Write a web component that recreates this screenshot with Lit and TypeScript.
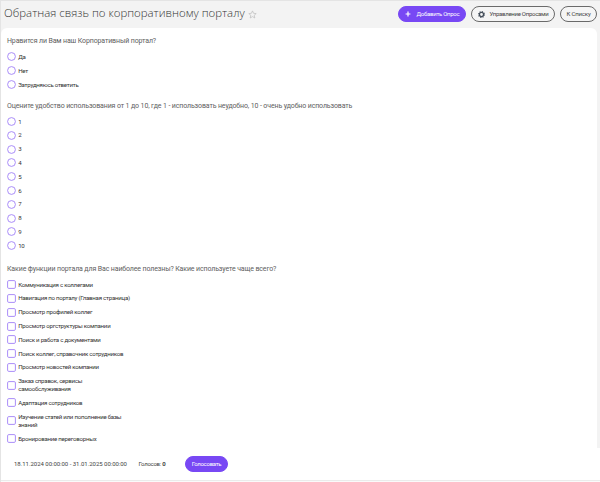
import { LitElement, html, css, svg } from "lit";
import { customElement, property } from "lit/decorators.js";

interface Question {
  title: string;
  kind: "radio" | "checkbox";
  options: string[];
}

const questions: Question[] = [
  {
    title: "Нравится ли Вам наш Корпоративный портал?",
    kind: "radio",
    options: ["Да", "Нет", "Затрудняюсь ответить"],
  },
  {
    title: "Оцените удобство использования от 1 до 10, где 1 - использовать неудобно, 10 - очень удобно использовать",
    kind: "radio",
    options: ["1", "2", "3", "4", "5", "6", "7", "8", "9", "10"],
  },
  {
    title: "Какие функции портала для Вас наиболее полезны? Какие используете чаще всего?",
    kind: "checkbox",
    options: [
      "Коммуникация с коллегами",
      "Навигация по порталу (Главная страница)",
      "Просмотр профилей коллег",
      "Просмотр оргструктуры компании",
      "Поиск и работа с документами",
      "Поиск коллег, справочник сотрудников",
      "Просмотр новостей компании",
      "Заказ справок, сервисы\nсамообслуживания",
      "Адаптация сотрудников",
      "Изучение статей или пополнение базы\nзнаний",
      "Бронирование переговорных",
    ],
  },
];

@customElement("poll-question")
export class PollQuestion extends LitElement {
  @property({ attribute: false }) question!: Question;

  static styles = css`
    :host { display: block; }
    .title {
      height: 10px;
      line-height: 10px;
      font-size: 7px;
      letter-spacing: -0.125px;
      color: #606060;
      white-space: nowrap;
      margin-bottom: 4.1px;
    }
    .option {
      display: flex;
      align-items: center;
      gap: 2.2px;
      padding: 2.9px 0;
      line-height: 8px;
      font-size: 6.1px;
      letter-spacing: -0.24px;
      color: #333;
    }
    .label { white-space: pre; }
    .mark { width: 9px; height: 9px; flex: none; overflow: visible; margin: -1px 0; }
    .mark * { fill: #fff; stroke: #a080f7; stroke-width: 0.9; }
  `;

  render() {
    const { title, kind, options } = this.question;
    const shape =
      kind === "radio"
        ? svg`<circle cx="4.5" cy="4.5" r="3.9"/>`
        : svg`<rect x="0.6" y="0.6" width="7.8" height="7.8" rx="1.2"/>`;
    return html`
      <div class="title"><span>${title}</span></div>
      ${options.map(
        (o) => html`<div class="option">
          <svg class="mark" viewBox="0 0 9 9">${shape}</svg><span class="label">${o}</span>
        </div>`
      )}
    `;
  }
}

@customElement("app-root")
export class AppRoot extends LitElement {
  static styles = css`
    :host {
      display: flex;
      flex-direction: column;
      box-sizing: border-box;
      width: 600px;
      height: 482px;
      background: #f3f3f3;
      border-top: 1px solid #e4e4e4;
      border-left: 1px solid #e4e4e4;
      font-family: Roboto, "Liberation Sans", sans-serif;
      overflow: hidden;
    }
    .header { display: flex; align-items: center; height: 27px; padding: 0 3px; flex: none; }
    .heading {
      font: 350 11.4px/24px "Open Sans", sans-serif;
      letter-spacing: 0.02px;
      color: #333;
      white-space: nowrap;
      width: 241px;
      margin-top: -3px;
    }
    .star { width: 9px; height: 9px; margin: -1px 0 0 3px; fill: none; stroke: #bbb; stroke-width: 0.7; }
    .actions { display: flex; gap: 5px; margin: -1px 0 0 auto; }
    .button {
      display: flex;
      align-items: center;
      justify-content: center;
      box-sizing: border-box;
      height: 16px;
      border-radius: 8px;
      border: 1px solid #6a6a6a;
      background: #f5f5f5;
      color: #444;
      font-size: 6px;
      line-height: 8px;
      letter-spacing: -0.27px;
      white-space: nowrap;
    }
    .primary { background: #7848f4; border-color: #7848f4; color: #fff; }
    .add { width: 68px; gap: 6px; }
    .manage { width: 84px; gap: 5px; }
    .list { width: 37px; letter-spacing: -0.15px; }
    .vote { width: 43px; }
    .icon { width: 6px; height: 6px; }
    .gear { width: 7px; height: 7px; }
    .panel {
      display: flex;
      flex-direction: column;
      box-sizing: border-box;
      width: 596px;
      height: 420px;
      padding: 8px 6px 0;
      background: #fff;
      border-radius: 6px 6px 0 0;
      flex: none;
    }
    .questions { display: flex; flex-direction: column; gap: 9.2px; }
    .questions > :last-child { margin-top: 2px; }
    .footer {
      display: flex;
      align-items: center;
      height: 32px;
      padding-left: 13px;
      background: #fff;
      border-bottom: 1px solid #ebebeb;
      font-size: 6px;
      line-height: 8px;
      color: #444;
      white-space: nowrap;
    }
    .dates { width: 124.5px; letter-spacing: -0.03px; }
    .votes { width: 46.5px; letter-spacing: -0.25px; }
    .bottom { flex: 1; background: #fafafa; }
  `;

  render() {
    return html`
      <div class="header">
        <span class="heading">Обратная связь по корпоративному порталу</span>
        <svg class="star" viewBox="0 0 9 9">
          <path d="M4.5 .9 5.6 3.3 8.2 3.6 6.2 5.3 6.8 8 4.5 6.6 2.2 8 2.8 5.3 .8 3.6 3.4 3.3Z" />
        </svg>
        <div class="actions">
          <div class="button primary add">
            <svg class="icon" viewBox="0 0 6 6"><path d="M3 .6V5.4M.6 3H5.4" stroke="#fff" stroke-width="1.2" /></svg>
            <span>Добавить Опрос</span>
          </div>
          <div class="button manage">
            <svg class="gear" viewBox="0 0 12 12" fill="none" stroke="#46505c">
              <circle cx="6" cy="6" r="3.5" stroke-width="2.2" />
              <circle cx="6" cy="6" r="5" stroke-width="2" stroke-dasharray="1.9 2.027" />
            </svg>
            <span>Управление Опросами</span>
          </div>
          <div class="button list"><span>К Списку</span></div>
        </div>
      </div>
      <div class="panel">
        <div class="questions">
          ${questions.map((q) => html`<poll-question .question=${q}></poll-question>`)}
        </div>
      </div>
      <div class="footer">
        <span class="dates">18.11.2024 00:00:00 - 31.01.2025 00:00:00</span>
        <span class="votes">Голосов: <b>0</b></span>
        <div class="button primary vote"><span>Голосовать</span></div>
      </div>
      <div class="bottom"></div>
    `;
  }
}
